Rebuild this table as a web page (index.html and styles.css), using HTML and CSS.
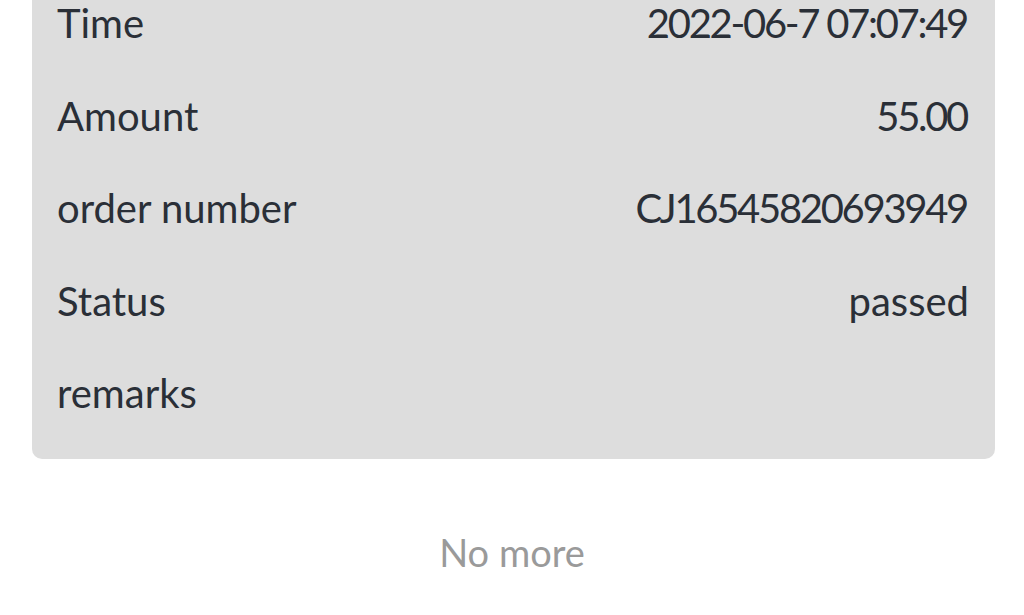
FILE: index.html
```html
<!DOCTYPE html>
<html>
<head>
<meta charset="utf-8">
<link rel="stylesheet" href="styles.css">
</head>
<body>
<div class="page">
  <div class="card">
    <div class="row"><span class="label">Time</span><span class="value num">2022-06-7 07:07:49</span></div>
    <div class="row"><span class="label">Amount</span><span class="value num">55.00</span></div>
    <div class="row"><span class="label">order number</span><span class="value num">CJ16545820693949</span></div>
    <div class="row"><span class="label">Status</span><span class="value">passed</span></div>
    <div class="row"><span class="label">remarks</span><span class="value"></span></div>
  </div>
  <div class="footer">No more</div>
</div>
</body>
</html>
```
FILE: styles.css
```css
html, body {
  margin: 0;
  padding: 0;
  background: #ffffff;
}
body {
  font-family: "Lato", "Liberation Sans", sans-serif;
  overflow: hidden;
}
.page {
  display: flex;
  flex-direction: column;
}
.card {
  margin: -23px 29px 0 32px;
  padding: 0 26px 19px 25px;
  background: #dddddd;
  border-radius: 0 0 10px 10px;
  color: #2a2f37;
  font-size: 40px;
}
.row {
  height: 92.5px;
  display: flex;
  align-items: center;
  justify-content: space-between;
}
.num {
  letter-spacing: -2.3px;
  margin-right: 2px;
}
.footer {
  height: 120px;
  line-height: 186px;
  text-align: center;
  color: #9a9a9a;
  font-size: 38px;
}
```
